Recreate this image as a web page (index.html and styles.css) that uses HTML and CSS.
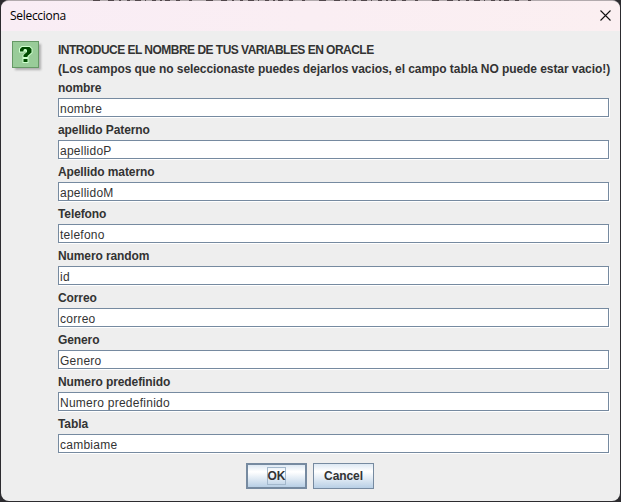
FILE: index.html
```
<!DOCTYPE html>
<html lang="es">
<head>
<meta charset="utf-8">
<title>Selecciona</title>
<link rel="stylesheet" href="styles.css">
</head>
<body>
<div class="dialog">
  <header class="titlebar">
    <span class="title">Selecciona</span>
    <svg class="close" width="11" height="11" viewBox="0 0 11 11"><path d="M.5 .5l10 10M10.5 .5l-10 10" stroke="#111" stroke-width="1.1" fill="none"/></svg>
  </header>
  <main class="content">
    <svg class="question" width="32" height="32" viewBox="0 0 32 32">
      <defs><filter id="soft"><feGaussianBlur stdDeviation="1.2"/></filter></defs>
      <rect x="3" y="3" width="26" height="26" fill="#999" opacity=".75" filter="url(#soft)"/>
      <rect x=".5" y=".5" width="26" height="26" fill="#9c9" stroke="#669966"/>
      <path d="M7 10V7.5L9.5 5H18L20.5 7.5V12L16.5 15.5V22H10.500V14L14 11.500V10.500H12V11.500H7Z" fill="#cfc"/>
      <path d="M8 10.500V8L10 6H17.500L19.500 8V11.500L15.500 15V16H11.500V14L15 11V9L14 8H12.500L11.500 9V10.500ZM11.500 18H15.500V21H11.500Z" fill="#004b00"/>
    </svg>
    <form class="form">
      <p class="line intro">INTRODUCE EL NOMBRE DE TUS VARIABLES EN ORACLE</p>
      <p class="line note">(Los campos que no seleccionaste puedes dejarlos vacios, el campo tabla NO puede estar vacio!)</p>
      <label class="label">nombre</label><div class="field">nombre</div>
      <label class="label">apellido Paterno</label><div class="field">apellidoP</div>
      <label class="label">Apellido materno</label><div class="field">apellidoM</div>
      <label class="label">Telefono</label><div class="field">telefono</div>
      <label class="label">Numero random</label><div class="field">id</div>
      <label class="label">Correo</label><div class="field">correo</div>
      <label class="label">Genero</label><div class="field">Genero</div>
      <label class="label">Numero predefinido</label><div class="field">Numero predefinido</div>
      <label class="label">Tabla</label><div class="field">cambiame</div>
    </form>
  </main>
  <footer class="buttons">
    <button class="button default"><span class="focus">OK</span></button>
    <button class="button">Cancel</button>
  </footer>
</div>
<svg class="behind" width="621" height="1"><path d="M93 .5H533" stroke="#51474b" stroke-dasharray="7 8 6 5 2 6 3 5 6 4 1 6 4 4 2 3 5 6 4 9 3 14"/></svg>
</body>
</html>
```
FILE: styles.css
```
* { box-sizing: border-box; }
body {
  margin: 0;
  width: 621px;
  height: 502px;
  overflow: hidden;
  background: #2c2b2f;
  font-family: "Liberation Sans", Arial, sans-serif;
  color: #333;
}
.dialog {
  width: 619px;
  height: 501px;
  margin-left: 1px;
  border-top: 1px solid #b2aaad;
  border-radius: 8px;
  overflow: hidden;
  background: #eee;
}
.titlebar {
  display: flex;
  justify-content: space-between;
  align-items: center;
  height: 30px;
  padding: 0 9px;
  background: linear-gradient(90deg, #f9edf5, #fbeff1);
}
.title {
  font: 12px/28px "Open Sans", "Noto Sans", sans-serif;
  letter-spacing: -0.3px;
  color: #000;
}
.close { display: block; margin-top: -2px; }
.behind { position: absolute; top: 0; left: 0; }
.content {
  display: flex;
  gap: 14px;
  padding: 10px 0 0 11px;
}
.question { flex: none; }
.form { width: 553px; flex: none; }
.line, .label {
  display: block;
  margin: 0;
  font-size: 12px;
  font-weight: bold;
  white-space: nowrap;
}
.line { height: 19px; line-height: 19px; }
.intro { letter-spacing: -0.52px; }
.note { letter-spacing: -0.065px; }
.label { height: 19px; line-height: 19px; letter-spacing: -0.1px; }
.field {
  width: 551px;
  height: 19px;
  margin-bottom: 4px;
  padding-left: 1px;
  border: 1px solid #768aa0;
  box-shadow: 1px 1px 0 #fff;
  background: #fff;
  font-size: 12px;
  line-height: 20px;
  letter-spacing: 0.25px;
}
.buttons {
  display: flex;
  gap: 6px;
  padding: 6px 0 0 245px;
}
.button {
  display: flex;
  align-items: center;
  justify-content: center;
  width: 61px;
  height: 26px;
  padding: 0;
  border: 1px solid #768aa0;
  background: linear-gradient(#dde8f3, #fff 30%, #fff 32%, #b8cfe5);
  font: bold 12px "Liberation Sans", Arial, sans-serif;
  letter-spacing: -0.1px;
  color: #333;
}
.default { border-width: 2px; }
.focus {
  height: 18px;
  border: 1px solid #a3b8cc;
  line-height: 17px;
}
```
